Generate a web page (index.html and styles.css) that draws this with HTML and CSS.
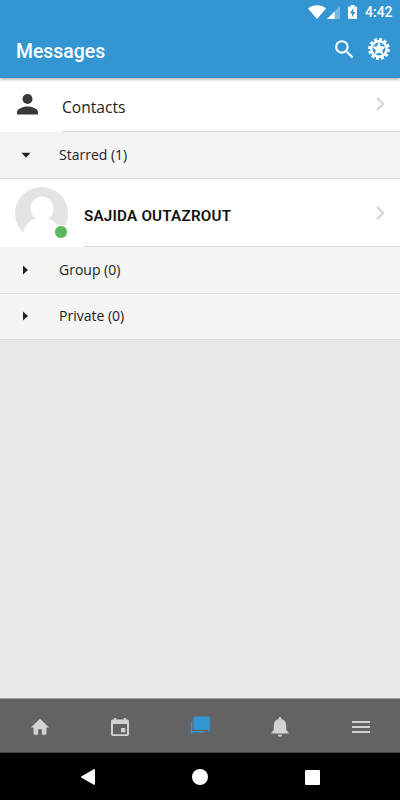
FILE: index.html
```html
<!DOCTYPE html>
<html lang="en">
<head>
  <meta charset="UTF-8">
  <meta name="viewport" content="width=device-width, initial-scale=1.0">
  <title>Messages</title>
  <link rel="stylesheet" href="styles.css">
</head>
<body>

<header class="header">
  <div class="status-bar">
    <svg class="wifi" width="18" height="14" viewBox="0 0 18 14"><path d="M0 3.4C5-.9 13-.9 18 3.4L9 14z"/></svg>
    <svg class="signal" width="13" height="13" viewBox="0 0 13 13"><path opacity=".35" d="M13 0v13H0z"/><path d="M7.6 5.4V13H0z"/></svg>
    <svg class="battery" width="9" height="14" viewBox="0 0 9 14"><path fill-rule="evenodd" d="M2.7 0h3.6v1.4H8c.6 0 1 .4 1 1V13c0 .6-.4 1-1 1H1c-.6 0-1-.4-1-1V2.4c0-.6.4-1 1-1h1.7zM5.4 3.2L1.8 8.3h2.1v3.9L7.4 7H5.4z"/></svg>
    <span class="time">4:42</span>
  </div>
  <div class="toolbar">
    <h1>Messages</h1>
    <svg class="search" width="25" height="25" viewBox="0 0 24 24"><path d="M15.5 14h-.79l-.28-.27A6.47 6.47 0 0 0 16 9.5 6.5 6.5 0 1 0 9.5 16c1.61 0 3.09-.59 4.23-1.57l.27.28v.79l5 4.99L20.49 19l-4.99-5zm-6 0a4.5 4.5 0 1 1 0-9 4.5 4.5 0 0 1 0 9z"/></svg>
    <svg class="gear" width="24" height="24" viewBox="-12 -12 24 24">
      <circle class="gear-teeth" r="9.4" pathLength="120"/>
      <circle class="gear-ring" r="7.7"/>
      <path d="M0-7L2-2.8 6.7-2.2 3.3 1.1 4.1 5.7 0 3.5-4.1 5.7-3.3 1.1-6.7-2.2-2-2.8z"/>
    </svg>
  </div>
</header>

<main class="content">
  <div class="item contacts">
    <svg class="person" width="21" height="21" viewBox="0 0 21 21"><circle cx="10.5" cy="5" r="5"/><path d="M0 20.5v-2.6c0-3.5 6.8-5.4 10.5-5.4S21 14.4 21 17.9v2.6z"/></svg>
    <div class="item-inner">
      <span>Contacts</span>
      <svg class="chevron" width="9" height="14" viewBox="0 0 9 14"><path d="M1.2 1l6 6-6 6"/></svg>
    </div>
  </div>

  <div class="group open">
    <svg class="arrow" width="10" height="10" viewBox="0 0 10 10"><path d="M.5 2.8h9L5 7.8z"/></svg>
    <span>Starred (1)</span>
  </div>

  <div class="item user">
    <div class="avatar">
      <svg width="53" height="53" viewBox="0 0 53 53">
        <circle cx="26.5" cy="26.5" r="26.5" fill="#e4e4e4"/>
        <path fill="#fff" d="M26.5 9.500a12 12 0 0 1 6.500 22.100C40 34 44 38.500 46 45V53H8V45.500C10 38.500 14 33.500 21 31.600A12 12 0 0 1 26.500 9.500z"/>
      </svg>
      <i class="online"></i>
    </div>
    <div class="item-inner">
      <strong>SAJIDA OUTAZROUT</strong>
      <svg class="chevron" width="9" height="14" viewBox="0 0 9 14"><path d="M1.2 1l6 6-6 6"/></svg>
    </div>
  </div>

  <div class="group">
    <svg class="arrow" width="10" height="10" viewBox="0 0 10 10"><path d="M2 .5v9L7 5z"/></svg>
    <span>Group (0)</span>
  </div>
  <div class="group">
    <svg class="arrow" width="10" height="10" viewBox="0 0 10 10"><path d="M2 .5v9L7 5z"/></svg>
    <span>Private (0)</span>
  </div>
</main>

<nav class="tabs">
  <a class="tab"><svg width="22" height="22" viewBox="0 0 24 24"><path d="M10 20.5v-6h4v6h5v-8h3L12 3 2 12.5h3v8z"/></svg></a>
  <a class="tab"><svg width="18" height="18" viewBox="0 0 18 18"><path fill-rule="evenodd" d="M3 0h2.2v1.5h7.6V0H15v1.500h1.200c1 0 1.800.8 1.800 1.800v12.900c0 1-.8 1.800-1.800 1.800H1.800C.8 18 0 17.200 0 16.200V3.300c0-1 .8-1.800 1.800-1.800H3zM2 6v10.200h14V6zm8 4h4.300v4.300H10z"/></svg></a>
  <a class="tab active"><svg width="20" height="20" viewBox="0 0 20 20"><path d="M4.500.5h14.300c.5 0 1 .4 1 1v15.200l-2.300-2.900H4.500c-.6 0-1-.4-1-1V1.500c0-.6.4-1 1-1z"/><path d="M.9 5.500h1.500v9.500H14.500V16.500H3.200L.9 19.200z"/></svg></a>
  <a class="tab"><svg width="18" height="20" viewBox="0 0 18 20"><path d="M9 0c.8 0 1.400.6 1.400 1.400v.5c2.800.6 4.800 3 4.800 6v5.200l2.300 2.300v1.200H.5v-1.200l2.300-2.300V7.900c0-3 2-5.400 4.800-6v-.5C7.600.6 8.200 0 9 0zM6.900 17.800h4.200a2.100 2 0 0 1-4.200 0z"/></svg></a>
  <a class="tab menu"><svg width="18" height="12" viewBox="0 0 18 12"><path d="M0 0h18v2H0zM0 5h18v2H0zM0 10h18v2H0z"/></svg></a>
</nav>

<footer class="android-nav">
  <svg width="14" height="16" viewBox="0 0 14 16"><path d="M12.8.2c.7-.4 1.200 0 1.200.7v14.200c0 .7-.5 1.100-1.200.7L.6 8.700c-.7-.4-.7-1 0-1.400z"/></svg>
  <svg width="16" height="16" viewBox="0 0 16 16"><circle cx="8" cy="8" r="8"/></svg>
  <svg width="15" height="15" viewBox="0 0 15 15"><rect width="15" height="15" rx="1"/></svg>
</footer>

</body>
</html>
```
FILE: styles.css
```css
* {
  box-sizing: border-box;
}

html, body {
  margin: 0;
  padding: 0;
  height: 100%;
  overflow: hidden;
}

body {
  display: flex;
  flex-direction: column;
  background: #e8e8e8;
  color: #222;
  font-family: "Open Sans", "Noto Sans", sans-serif;
}

svg {
  display: block;
  flex: none;
  fill: currentColor;
}

/* header */
.header {
  height: 78px;
  flex: none;
  background: #3396d3;
  color: #fff;
  font-family: Roboto, sans-serif;
  z-index: 1;
  box-shadow: 0 1px 3px rgba(0, 0, 0, 0.4);
}

.status-bar {
  height: 24px;
  display: flex;
  align-items: center;
  justify-content: flex-end;
  padding-right: 8px;
}

.signal {
  margin-left: 1px;
}

.battery {
  margin-left: 8px;
}

.time {
  width: 27px;
  margin-left: 8px;
  font-size: 14px;
  font-weight: 500;
  line-height: 24px;
  white-space: nowrap;
}

.toolbar {
  height: 54px;
  display: flex;
  align-items: center;
  padding: 0 9px 4px 16px;
}

.toolbar h1 {
  flex: 1;
  margin: 0;
  padding-top: 4px;
  font-size: 19.4px;
  font-weight: 500;
}

.search {
  margin-right: 10px;
}

.gear-teeth {
  fill: none;
  stroke: #fff;
  stroke-width: 3;
  stroke-dasharray: 6 4;
}

.gear-ring {
  fill: none;
  stroke: #fff;
  stroke-width: 2.4;
}

/* list */
.content {
  flex: 1;
}

.item {
  display: flex;
  background: #fff;
}

.item-inner {
  flex: 1;
  display: flex;
  align-items: center;
  justify-content: space-between;
  padding-right: 15px;
  border-bottom: 1px solid #dadada;
}

.chevron {
  fill: none;
  stroke: #d3d3d3;
  stroke-width: 2;
}

.contacts {
  height: 54px;
  padding-left: 17px;
  font-size: 15.6px;
}

.contacts .item-inner {
  margin-left: 24px;
  padding-top: 4px;
}

.contacts .chevron {
  margin-bottom: 5px;
}

.person {
  margin-top: 16px;
  color: #383838;
}

.group {
  height: 46.5px;
  display: flex;
  align-items: center;
  padding-left: 21px;
  border-bottom: 1px solid #dcdcdc;
  background: #f4f4f4;
  font-size: 14px;
}

.group span {
  padding-bottom: 1px;
}

.group.open {
  height: 47px;
}

.arrow {
  margin-right: 28px;
}

.user {
  height: 68px;
  padding-left: 15px;
}

.user .item-inner {
  margin-left: 16px;
  padding-top: 5px;
}

.user strong {
  padding-top: 1px;
  color: #111;
  font-family: Roboto, sans-serif;
  font-size: 15.2px;
  font-weight: 600;
  letter-spacing: 0.22px;
}

.user .chevron {
  margin-bottom: 4px;
}

.avatar {
  position: relative;
  width: 53px;
  height: 53px;
  margin-top: 8px;
}

.online {
  position: absolute;
  right: 0;
  bottom: 1px;
  width: 14px;
  height: 14px;
  border: 1px solid #fff;
  border-radius: 50%;
  background: #5cb85c;
}

/* bottom tabs */
.tabs {
  height: 55px;
  flex: none;
  display: flex;
  border-top: 1px solid #a0a0a0;
  border-bottom: 1px solid #444;
  background: #636363;
  color: #d2d2d2;
}

.tab {
  width: 20%;
  display: flex;
  align-items: center;
  justify-content: center;
  padding-top: 3px;
}

.tab.active {
  padding: 1px 0 0;
  color: #3396d3;
}

.tab.menu {
  padding-left: 2px;
}

.android-nav {
  height: 47px;
  flex: none;
  display: flex;
  align-items: center;
  justify-content: space-between;
  padding: 1px 80px 0 81px;
  background: #000;
  color: #fff;
}
```
